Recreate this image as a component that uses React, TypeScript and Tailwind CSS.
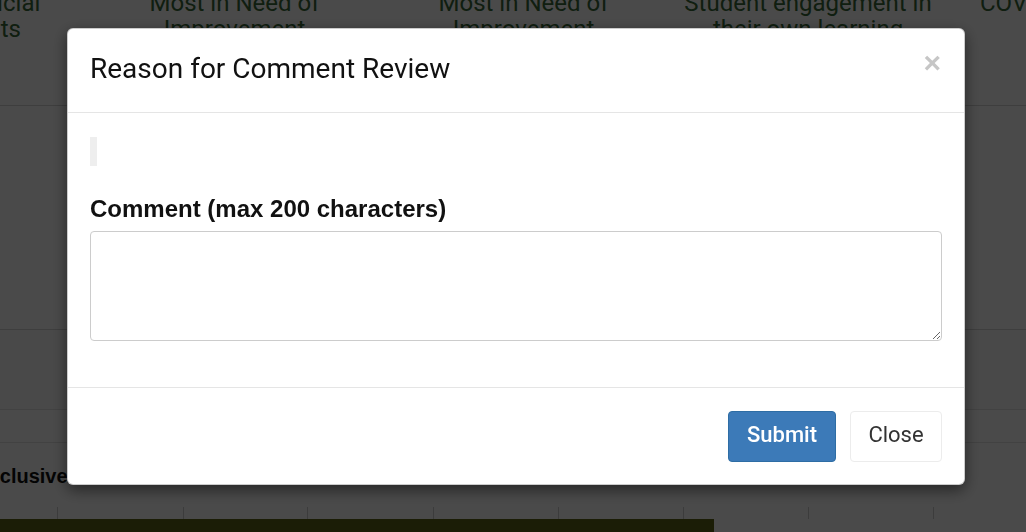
import { useState } from 'react'

const headerCells = [
  { w: 'w-[124px]', align: 'text-left', lines: ['Official', 'Units'] },
  { w: 'w-[289px]', align: 'text-center', lines: ['Most in Need of', 'Improvement'] },
  { w: 'w-[289px]', align: 'text-center', lines: ['Most in Need of', 'Improvement'] },
  { w: 'w-[280px]', align: 'text-center', lines: ['Student engagement in', 'their own learning'] },
  { w: 'w-[140px]', align: 'text-left pl-[32px]', lines: ['COVID-19'] },
]

const ticks = [58, 126, 124, 126, 125, 125, 125, 125]

function BackgroundPage() {
  return (
    <div className="w-[1026px] h-[532px] overflow-hidden bg-white font-['Roboto',sans-serif]">
      <div className="flex h-[106px] border-b border-[#d4d4d4] -ml-[34px] text-[24px] leading-[26px] text-[#376837]">
        {headerCells.map((c, i) => (
          <div key={i} className={`${c.w} ${c.align} shrink-0 -mt-[10px]`}>
            {c.lines.map(l => (
              <div key={l} className="whitespace-nowrap">{l}</div>
            ))}
          </div>
        ))}
      </div>
      <div className="h-[224px] border-b border-[#d4d4d4]" />
      <div className="h-[80px] border-b border-[#e2e2e2] bg-[#fafafa]" />
      <div className="h-[33px] border-b border-[#e2e2e2]" />
      <div className="h-[64px] flex items-center -ml-[18px] pt-[2px] font-['Liberation_Sans',sans-serif] font-bold text-[20px] text-[#111]">
        Inclusive
      </div>
      <div className="flex h-[12px]">
        {ticks.map((t, i) => (
          <div key={i} className="shrink-0 border-r border-[#d0d0d0]" style={{ width: t }} />
        ))}
      </div>
      <div className="w-[714px] h-[20px] bg-[#5d6517]" />
    </div>
  )
}

export default function App() {
  const [comment, setComment] = useState('')

  return (
    <div className="relative w-[1026px] h-[532px] overflow-hidden">
      <BackgroundPage />
      <div className="fixed inset-0 bg-black/[0.71]" />
      <div className="fixed inset-0 pt-[28px] pl-[67px]">
        <div className="w-[898px] rounded-[6px] bg-white border border-black/20 shadow-[0_5px_15px_rgba(0,0,0,0.5)] font-['Roboto',sans-serif] text-[#333]">
          <div className="h-[84px] flex items-center justify-between pl-[22px] pr-[23px] border-b border-[#e5e5e5]">
            <h4 className="text-[28px] leading-[32px] text-[#111] -mt-[4px]">Reason for Comment Review</h4>
            <button
              type="button"
              className="font-['Liberation_Sans',sans-serif] font-bold text-[30px] leading-none text-[#c6c6c6] -mt-[16px]"
            >
              ×
            </button>
          </div>

          <div className="h-[274px] px-[22px] pt-[24px]">
            <div className="w-[7px] h-[29px] bg-[#eeeeee]" />
            <label className="block mt-[29px] font-['Liberation_Sans',sans-serif] font-bold text-[24px] leading-[28px] text-[#111]">
              Comment (max 200 characters)
            </label>
            <textarea
              className="block mt-[8px] w-[852px] h-[110px] rounded-[4px] border border-[#cccccc] px-3 py-2 text-[16px] outline-none"
              value={comment}
              maxLength={200}
              onChange={e => setComment(e.target.value)}
            />
          </div>

          <div className="h-[97px] flex items-center justify-end gap-[14px] pr-[22px] border-t border-[#e5e5e5]">
            <button
              type="button"
              className="w-[108px] h-[51px] pb-[3px] rounded-[4px] bg-[#3c7ab8] border border-[#2e6da4] text-white text-[22px] font-medium"
            >
              Submit
            </button>
            <button
              type="button"
              className="w-[92px] h-[51px] pb-[3px] rounded-[4px] bg-white border border-[#ececec] text-[#333] text-[22px]"
            >
              Close
            </button>
          </div>
        </div>
      </div>
    </div>
  )
}
